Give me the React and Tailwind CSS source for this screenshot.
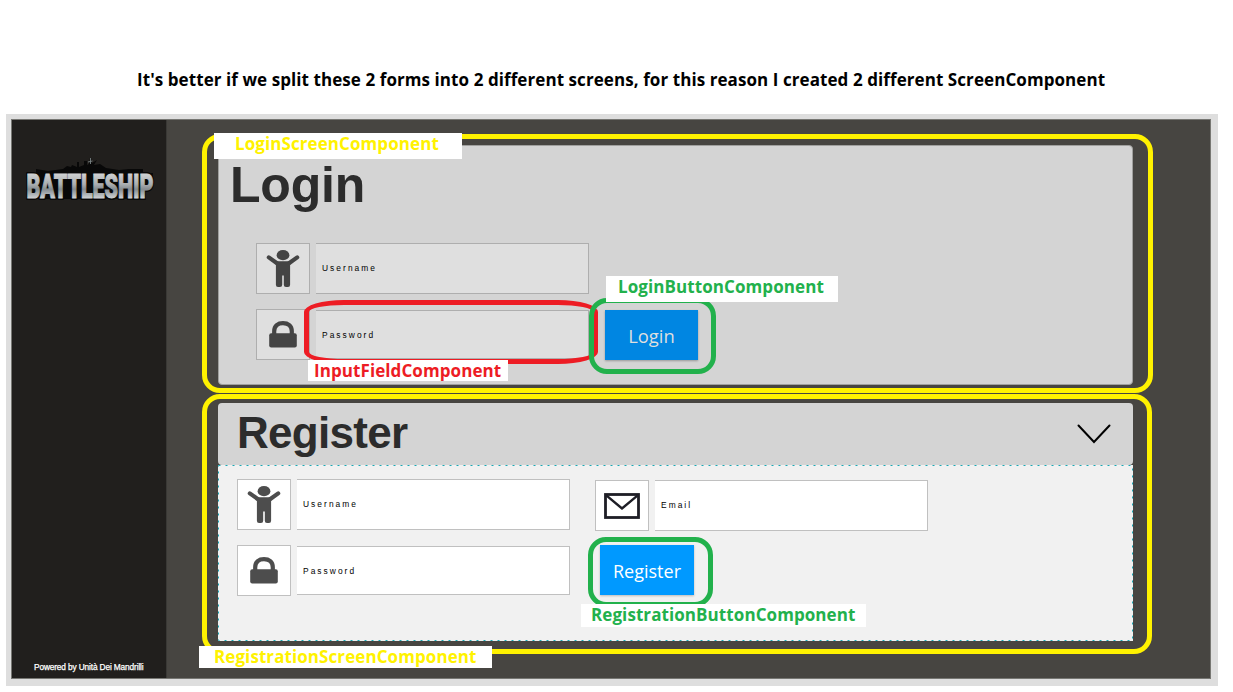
const uiFont = "font-['Open_Sans','Noto_Sans',sans-serif]";
const arial = "font-['Liberation_Sans',Arial,sans-serif]";

function PersonIcon({ className }) {
  return (
    <svg width="34" height="38" viewBox="0 0 34 38" className={className} fill="currentColor">
      <ellipse cx="17" cy="5.2" rx="6.4" ry="5.1" />
      <path d="M2.8 7.4 L11 13.2 M31.2 7.4 L23 13.2" stroke="currentColor" strokeWidth="4.2" strokeLinecap="round" />
      <path d="M9 11.3 H25 L24.1 15 V34.8 A2.2 2.2 0 0 1 21.8 37 H20 A2.2 2.2 0 0 1 17.8 34.8 V25.5 H16.2 V34.8 A2.2 2.2 0 0 1 14 37 H12.2 A2.2 2.2 0 0 1 9.9 34.8 V15 Z" />
    </svg>
  );
}

function LockIcon({ className }) {
  return (
    <svg width="28" height="27" viewBox="0 0 28 27" className={className}>
      <path d="M5.2 14 V10.2 C5.2 4.6 9 2.1 14 2.1 S22.8 4.6 22.8 10.2 V14" fill="none" stroke="currentColor" strokeWidth="4.2" />
      <rect x="0.2" y="12.2" width="27.6" height="14.2" rx="2" fill="currentColor" />
    </svg>
  );
}

function MailIcon() {
  return (
    <svg width="36" height="26" viewBox="0 0 36 26" fill="none" stroke="#1e1e26">
      <rect x="1.5" y="1.5" width="33" height="23" strokeWidth="2.8" />
      <path d="M2 2.2 L18 15.5 L34 2.2" strokeWidth="2.4" />
    </svg>
  );
}

function Field({ label, icon, dim, short }) {
  const skin = dim ? "bg-[#dfdfdf] border-[#aeaeae]" : "bg-white border-[#c0c0c0]";
  return (
    <div className="flex h-[51px] items-center gap-[6px]">
      <div className={`flex h-[51px] w-[54px] items-center justify-center border ${skin}`}>{icon}</div>
      <div
        className={`flex w-[273px] items-center border border-l-0 pl-[6px] text-[8.4px] tracking-[2.05px] text-black ${arial} ${skin} ${short ? "h-[49px] pt-[1px]" : "h-[51px]"}`}
      >
        {label}
      </div>
    </div>
  );
}

function Note({ className, children }) {
  return (
    <div className={`absolute whitespace-nowrap bg-white text-[17px] font-bold tracking-[0.08px] ${uiFont} ${className}`}>{children}</div>
  );
}

function Logo() {
  return (
    <svg width="144" height="50" viewBox="0 0 144 50" className="ml-[11px] mt-[33px] block overflow-visible">
      <defs>
        <linearGradient id="steel" gradientUnits="userSpaceOnUse" x1="0" y1="20" x2="0" y2="45">
          <stop offset="0" stopColor="#d2d4d5" />
          <stop offset="0.45" stopColor="#aaaeb1" />
          <stop offset="0.65" stopColor="#858c91" />
          <stop offset="1" stopColor="#ccd0d3" />
        </linearGradient>
      </defs>
      <path
        d="M13 22 V16 L25 18 L40 16 L44 13 L48 14 L49 12 L54 14 V9 H56 V14 L61 12 V8 H64 V12 L66 11 L67 5 H68 L69 10 L74 7 L71 12 L77 11 L83 15 L96 17 L106 16 L120 16 V20 H130 L129 33 L120 38 L119 46 H4 L3 20 Z"
        fill="#080808"
      />
      <path d="M67.5 5 V11 M65 9 L69.5 8" stroke="#7c8486" strokeWidth="0.9" />
      <g fontFamily="Roboto, Open Sans, sans-serif" fontWeight="900" fontSize="33.5">
        <text x="3.5" y="45" textLength="127" lengthAdjust="spacingAndGlyphs" fill="#080808" stroke="#080808" strokeWidth="4">
          BATTLESHIP
        </text>
        <text x="3.5" y="45" textLength="127" lengthAdjust="spacingAndGlyphs" fill="url(#steel)" stroke="url(#steel)" strokeWidth="1.1" aria-hidden="true">
          BATTLESHIP
        </text>
      </g>
    </svg>
  );
}

export default function App() {
  return (
    <div className="relative h-[692px] w-[1233px] overflow-hidden bg-white">
      <header className="h-[114px] pl-[137px] pt-[68px]">
        <p className={`whitespace-nowrap text-[17px] font-bold leading-[24px] tracking-[0.075px] text-black ${uiFont}`}>
          It's better if we split these 2 forms into 2 different screens, for this reason I created 2 different ScreenComponent
        </p>
      </header>

      <div className="ml-[6px] h-[572px] w-[1212px] bg-[#dedede] pl-[5px] pt-[5px]">
        <div className="flex h-[560px] w-[1200px] border border-[#777773] bg-[#474541]">
          <aside className="flex w-[155px] flex-col justify-between border-r border-[#3a3936] bg-[#211f1d]">
            <Logo />
            <p className={`pb-[5px] pl-[22px] text-[8.3px] leading-[12px] tracking-[-0.13px] text-white whitespace-nowrap [-webkit-text-stroke:0.25px_white] ${arial}`}>
              Powered by Unità Dei Mandrilli
            </p>
          </aside>

          <main className="flex flex-col pl-[51px] pt-[25px]">
            <section className="h-[240px] w-[915px] rounded-[4px] border border-[#a0a09e] bg-[#d4d4d4]">
              <h1 className={`pl-[11px] pt-[11px] text-[50px] font-bold leading-[56px] tracking-[-0.2px] text-[#2c2c2c] ${arial}`}>Login</h1>
              <div className="flex flex-col gap-[15px] pl-[37px] pt-[30px]">
                <Field dim label="Username" icon={<PersonIcon className="text-[#444444]" />} />
                <div className="flex gap-[16px]">
                  <Field dim short label="Password" icon={<LockIcon className="text-[#444444]" />} />
                  <button className={`mt-[1px] h-[50px] w-[93px] bg-[#0086e2] pt-[2px] text-[18.4px] text-[#dfdfdf] shadow-[0_1px_2px_#999] ${uiFont}`}>
                    Login
                  </button>
                </div>
              </div>
            </section>

            <section className="mt-[18px] w-[915px]">
              <div className="flex h-[62px] items-center justify-between rounded-[4px] bg-[#d4d4d4] pl-[19px] pr-[22px]">
                <h1 className={`pb-[2px] text-[44px] font-bold leading-[58px] tracking-[-0.7px] text-[#2c2c2c] ${arial}`}>Register</h1>
                <svg width="34" height="20" viewBox="0 0 34 20" fill="none" stroke="#000" strokeWidth="2" strokeLinecap="round">
                  <path d="M1.5 1.5 L17 18 L32.5 1.5" />
                </svg>
              </div>
              <div className="relative h-[176px] bg-[#f1f1f1] pl-[19px] pt-[14px]">
                <svg className="absolute left-0 top-0" width="915" height="176" fill="none" stroke="#18a8b5" strokeDasharray="2 5">
                  <rect x="0.5" y="0.5" width="914" height="175" />
                </svg>
                <div className="flex gap-[25px]">
                  <Field label="Username" icon={<PersonIcon className="text-[#4d4d4d]" />} />
                  <div className="pt-[1px]">
                    <Field label="Email" icon={<MailIcon />} />
                  </div>
                </div>
                <div className="flex gap-[30px] pt-[14px]">
                  <Field short label="Password" icon={<LockIcon className="text-[#4d4d4d]" />} />
                  <button className={`h-[50px] w-[94px] bg-[#0099ff] pt-[3px] text-[18px] text-white shadow-[0_1px_2px_#bbb] ${uiFont}`}>
                    Register
                  </button>
                </div>
              </div>
            </section>
          </main>
        </div>
      </div>

      {/* Annotation outlines */}
      <div className="absolute left-[202px] top-[134px] h-[259px] w-[951px] rounded-[18px] border-[5px] border-[#fff200]" />
      <div className="absolute left-[202px] top-[394px] h-[260px] w-[950px] rounded-[18px] border-[5px] border-[#fff200]" />
      <div className="absolute left-[304px] top-[300px] h-[64px] w-[294px] rounded-[40px/12px] border-[5px] border-[#ed1c24]" />
      <div className="absolute left-[589px] top-[298px] h-[76px] w-[127px] rounded-[18px] border-[5px] border-[#22b14c]" />
      <div className="absolute left-[588px] top-[537px] h-[70px] w-[125px] rounded-[18px] border-[5px] border-[#22b14c]" />

      <Note className="left-[214px] top-[133px] h-[26px] w-[248px] pl-[21px] leading-[22px] text-[#fff200]">LoginScreenComponent</Note>
      <Note className="left-[606px] top-[276px] h-[26px] w-[232px] pl-[12px] leading-[22px] text-[#22b14c]">LoginButtonComponent</Note>
      <Note className="left-[308px] top-[360px] h-[21px] w-[200px] pl-[6px] leading-[22px] text-[#ed1c24]">InputFieldComponent</Note>
      <Note className="left-[581px] top-[604px] h-[23px] w-[285px] pl-[10px] leading-[22px] text-[#22b14c]">RegistrationButtonComponent</Note>
      <Note className="left-[199px] top-[646px] h-[22px] w-[293px] pl-[15px] leading-[22px] text-[#fff200]">RegistrationScreenComponent</Note>
    </div>
  );
}
